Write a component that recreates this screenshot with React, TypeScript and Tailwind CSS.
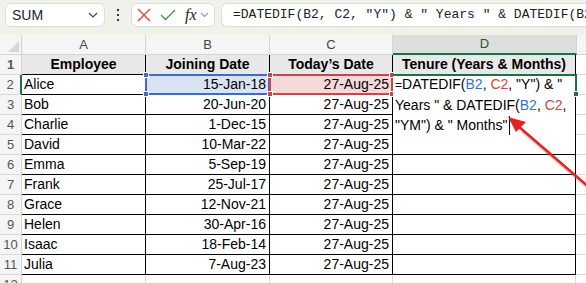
import React from "react";

const rows = [
  ["Alice", "15-Jan-18"],
  ["Bob", "20-Jun-20"],
  ["Charlie", "1-Dec-15"],
  ["David", "10-Mar-22"],
  ["Emma", "5-Sep-19"],
  ["Frank", "25-Jul-17"],
  ["Grace", "12-Nov-21"],
  ["Helen", "30-Apr-16"],
  ["Isaac", "18-Feb-14"],
  ["Julia", "7-Aug-23"],
];

const cellFont = { fontFamily: '"Liberation Sans", Arial, sans-serif' };

function Handle({ className }: { className: string }) {
  return <span className={"absolute h-[6px] w-[6px] border border-white " + className} />;
}

function RowHead({ n, active }: { n: number; active?: boolean }) {
  return (
    <div
      className={
        "flex h-full w-[22px] shrink-0 items-center justify-center border-b border-[#dadada] bg-[#f5f5f5] text-[13px] text-[#555] " +
        (active ? "border-r-2 border-r-[#1e7145]" : "border-r border-r-[#d4d4d4]")
      }
    >
      {n}
    </div>
  );
}

export default function App() {
  return (
    <div className="relative h-[283px] w-[586px] overflow-hidden bg-white" style={cellFont}>
      {/* formula bar */}
      <div className="flex h-[35px] items-start gap-[6px] bg-[#eef2ea] pl-[5px] pt-[3px]">
        <div className="flex h-[24px] w-[100px] shrink-0 items-center justify-between rounded-md border border-[#dcdcdc] bg-white pl-[6px] pr-[6px] text-[14px] text-[#222]">
          <span>SUM</span>
          <svg width="10" height="6" viewBox="0 0 10 6" fill="none" stroke="#444" strokeWidth="1.2">
            <path d="M1 1l4 4 4-4" />
          </svg>
        </div>
        <div className="flex h-[24px] w-[14px] shrink-0 flex-col items-center justify-center gap-[3px]">
          <span className="h-[2px] w-[2px] bg-[#333]" />
          <span className="h-[2px] w-[2px] bg-[#333]" />
          <span className="h-[2px] w-[2px] bg-[#333]" />
        </div>
        <div className="flex h-[24px] w-[84px] shrink-0 items-center gap-[9px] rounded-md border border-[#dcdcdc] bg-white pl-[5px]">
          <svg width="14" height="14" viewBox="0 0 14 14" stroke="#e0403a" strokeWidth="1.4">
            <path d="M1 1l12 12M13 1L1 13" />
          </svg>
          <svg width="16" height="12" viewBox="0 0 16 12" fill="none" stroke="#2f9e4f" strokeWidth="1.4">
            <path d="M1 6l4.5 4.5L15 1" />
          </svg>
          <div className="flex items-center gap-[3px]">
            <span className="text-[16px] italic text-[#222]" style={{ fontFamily: '"Liberation Serif", serif' }}>
              fx
            </span>
            <svg width="9" height="6" viewBox="0 0 9 6" fill="none" stroke="#999" strokeWidth="1.1">
              <path d="M1 1l3.5 3.5L8 1" />
            </svg>
          </div>
        </div>
        <div
          className="flex h-[24px] min-w-0 flex-1 items-center overflow-hidden whitespace-nowrap rounded-l-md border border-r-0 border-[#dcdcdc] bg-white pl-[11px] text-[13px] text-[#222]"
          style={{ fontFamily: '"Liberation Mono", monospace' }}
        >
          =DATEDIF(B2, C2, "Y") &amp; " Years " &amp; DATEDIF(B2, C2, "YM") &amp; " Months"
        </div>
      </div>

      {/* column headers */}
      <div className="flex h-[20px] text-[13px] text-[#444]">
        <div className="relative w-[22px] shrink-0 border-b border-r border-[#d4d4d4] bg-[#f5f5f5]">
          <svg className="absolute bottom-[2px] right-[2px]" width="11" height="11" viewBox="0 0 11 11">
            <path d="M11 0V11H0Z" fill="#d6d6d6" />
          </svg>
        </div>
        <div className="flex w-[124px] shrink-0 items-center justify-center border-b border-r border-[#d4d4d4] bg-[#f5f5f5]">A</div>
        <div className="flex w-[124px] shrink-0 items-center justify-center border-b border-r border-[#d4d4d4] bg-[#f5f5f5]">B</div>
        <div className="flex w-[123px] shrink-0 items-center justify-center border-b border-r border-[#d4d4d4] bg-[#f5f5f5]">C</div>
        <div className="flex w-[184px] shrink-0 items-center justify-center border-b-2 border-r border-b-[#1e7145] border-r-[#d4d4d4] bg-[#dedede] text-[#1e5a37]">
          D
        </div>
        <div className="flex-1 border-b border-[#d4d4d4] bg-[#f5f5f5]" />
      </div>

      {/* row 1 */}
      <div className="flex h-[20px] text-[14px] font-bold text-black">
        <RowHead n={1} />
        <div className="flex w-[124px] shrink-0 items-center justify-center border-b border-r border-black bg-[#e8e8e8]">Employee</div>
        <div className="flex w-[124px] shrink-0 items-center justify-center border-b border-r border-black bg-[#e8e8e8]">Joining Date</div>
        <div className="flex w-[123px] shrink-0 items-center justify-center border-b border-r border-black bg-[#e8e8e8]">Today’s Date</div>
        <div className="flex w-[183px] shrink-0 items-center justify-center border-b border-r border-black bg-[#e8e8e8]">
          Tenure (Years &amp; Months)
        </div>
        <div className="flex-1 border-b border-[#dadada]" />
      </div>

      {rows.map(([name, date], i) => {
        const first = i === 0;
        return (
          <div key={name} className="flex h-[20px] text-[14px] text-black">
            <RowHead n={i + 2} active={first} />
            <div className="flex w-[124px] shrink-0 items-center border-b border-r border-black pl-[2px]">{name}</div>
            {first ? (
              <>
                <div className="relative flex w-[124px] shrink-0 items-center justify-end border-b border-r border-black bg-[#dae3f3] pr-[3px]">
                  <div className="pointer-events-none absolute -left-[1px] -top-[1px] bottom-[-1px] right-[-1px] border-2 border-[#3b6fc4]" />
                  <Handle className="-left-[3px] -top-[3px] bg-[#3b6fc4]" />
                  <Handle className="-bottom-[3px] -left-[3px] bg-[#3b6fc4]" />
                  <span className="relative">{date}</span>
                </div>
                <div className="relative flex w-[123px] shrink-0 items-center justify-end border-b border-r border-black bg-[#f5d8da] pr-[3px]">
                  <div className="pointer-events-none absolute -left-[1px] -top-[1px] bottom-[-1px] right-[-1px] border-2 border-[#c8474c]" />
                  <Handle className="-left-[3px] -top-[3px] bg-[#c8474c]" />
                  <Handle className="-right-[3px] -top-[3px] bg-[#c8474c]" />
                  <Handle className="-bottom-[3px] -left-[3px] bg-[#c8474c]" />
                  <Handle className="-bottom-[3px] -right-[3px] bg-[#c8474c]" />
                  <span className="relative">27-Aug-25</span>
                </div>
                <div className="relative w-[183px] shrink-0 border-b border-r border-black">
                  <div className="absolute -top-[1px] left-0 right-0 z-10 h-[61px] bg-white pl-[2px] leading-[20px]">
                    <div>
                      <span className="text-[12px]">=</span>DATEDIF(<span className="text-[#3b6fc4]">B2</span>,{" "}
                      <span className="text-[#c8474c]">C2</span>, "Y") &amp; "
                    </div>
                    <div>
                      Years " &amp; DATEDIF(<span className="text-[#3b6fc4]">B2</span>, <span className="text-[#c8474c]">C2</span>,
                    </div>
                    <div className="flex items-center">
                      "YM") &amp; " Months"
                      <span className="ml-[2px] inline-block h-[19px] w-[1px] bg-black" />
                    </div>
                  </div>
                  <div className="absolute -top-[1px] left-0 right-[-2px] z-20 h-[2px] bg-[#1e7145]" />
                  <div className="absolute -top-[1px] right-[-2px] z-20 h-[21px] w-[2px] bg-[#1e7145]" />
                  <span className="absolute -right-[4px] bottom-[-3px] z-20 h-[6px] w-[6px] border border-white bg-[#1e7145]" />
                </div>
              </>
            ) : (
              <>
                <div className="flex w-[124px] shrink-0 items-center justify-end border-b border-r border-black pr-[3px]">{date}</div>
                <div className="flex w-[123px] shrink-0 items-center justify-end border-b border-r border-black pr-[3px]">27-Aug-25</div>
                <div className="w-[183px] shrink-0 border-b border-r border-black" />
              </>
            )}
            <div className="flex-1 border-b border-[#dadada]" />
          </div>
        );
      })}

      {/* row 12 */}
      <div className="flex h-[20px]">
        <RowHead n={12} />
        <div className="w-[124px] shrink-0 border-r border-[#dadada]" />
        <div className="w-[124px] shrink-0 border-r border-[#dadada]" />
        <div className="w-[123px] shrink-0 border-r border-[#dadada]" />
        <div className="w-[183px] shrink-0 border-r border-[#dadada]" />
      </div>

      {/* annotation arrow */}
      <svg className="pointer-events-none absolute left-0 top-0 z-30" width="586" height="283">
        <g transform="translate(2,3)" opacity="0.35">
          <line x1="520" y1="128" x2="592" y2="190" stroke="#777" strokeWidth="3" />
        </g>
        <line x1="518" y1="126" x2="590" y2="188" stroke="#e8201e" strokeWidth="2.5" />
        <path d="M508 117 L526 122 L516 132 Z" fill="#e8201e" />
      </svg>
    </div>
  );
}
